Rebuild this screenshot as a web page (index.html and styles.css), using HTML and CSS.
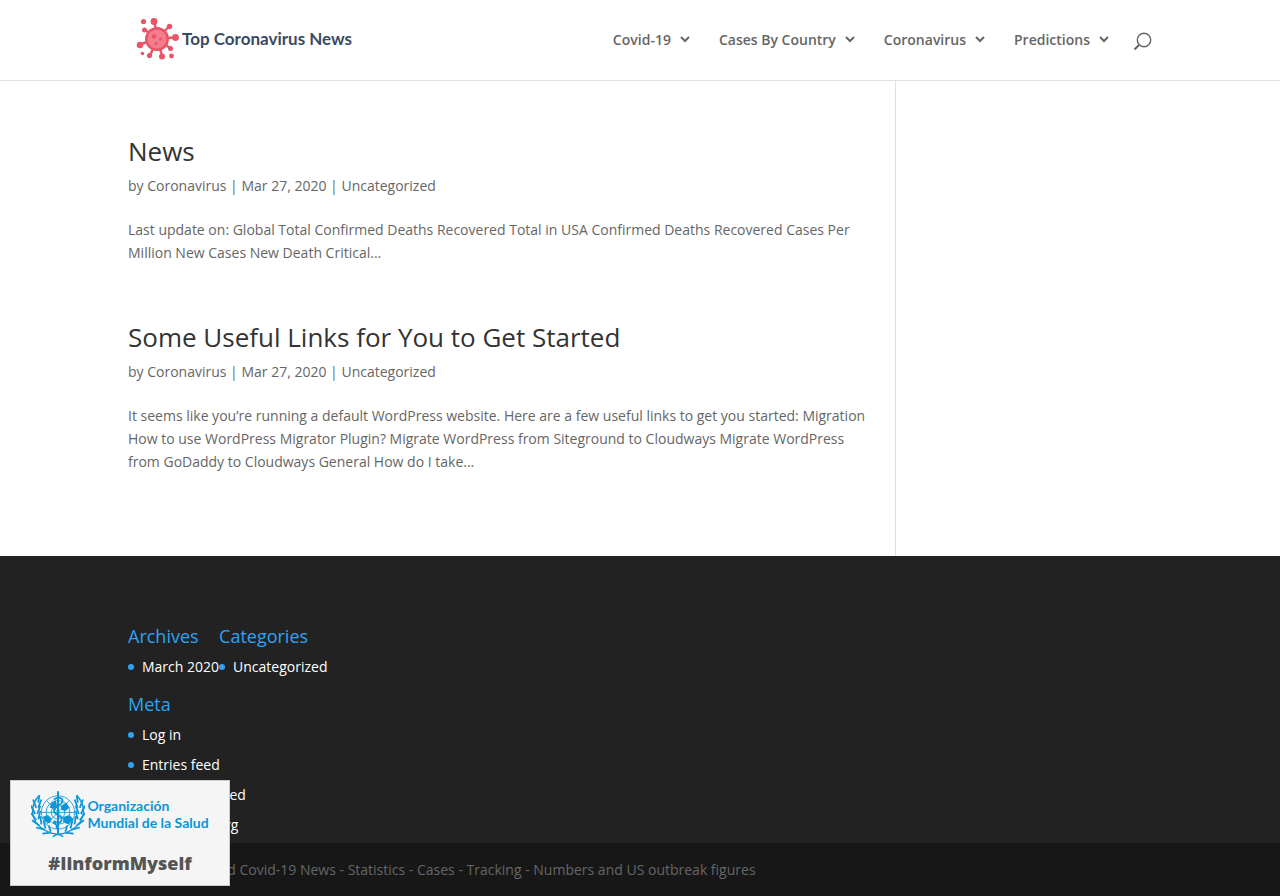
FILE: index.html
```html
<!DOCTYPE html>
<html lang="en">
<head>
<meta charset="utf-8">
<meta name="viewport" content="width=device-width, initial-scale=1">
<title>Top Coronavirus News</title>
<link rel="stylesheet" href="styles.css">
</head>
<body>
<header class="site-header">
  <div class="container header-row">
    <a class="logo" href="#">
      <svg class="logo-mark" viewBox="0 0 44 44" aria-hidden="true">
        <g stroke="#e95468" stroke-width="2.4" stroke-linecap="round">
          <path d="M21.500 21.500L18.500 5M21.500 21.500L33 9.500M21.500 21.500L39 20.500M21.500 21.500L34.500 31.500M21.500 21.500L26 39M21.500 21.500L14 38.500M21.500 21.500L5 27M21.500 21.500L9 13"/>
        </g>
        <g fill="#e95468">
          <circle cx="21" cy="22" r="12"/>
          <circle cx="18" cy="4.500" r="3.400"/><circle cx="33.500" cy="9.500" r="2.700"/>
          <circle cx="39.500" cy="20.500" r="3.400"/><circle cx="34.500" cy="31.500" r="2.500"/>
          <circle cx="26" cy="39.500" r="3"/><circle cx="13.500" cy="38.500" r="2.600"/>
          <circle cx="4" cy="28" r="3.300"/><circle cx="8.500" cy="13" r="2.500"/>
          <circle cx="7.500" cy="4.500" r="2.600"/><circle cx="6.500" cy="36.500" r="1.800"/>
          <circle cx="35.500" cy="39" r="2.400"/>
        </g>
        <circle cx="21" cy="22" r="9.500" fill="#f47c8b"/>
        <g fill="#e95468"><circle cx="18" cy="19.500" r="2.200"/><circle cx="24.500" cy="22" r="1.600"/><circle cx="20" cy="26.500" r="1.600"/></g>
      </svg>
      <span class="logo-text">Top Coronavirus News</span>
    </a>
    <nav class="menu">
      <a href="#">Covid-19<svg class="chevron" viewBox="0 0 12 8" aria-hidden="true"><path d="M2 2L6 6L10 2"/></svg></a>
      <a href="#">Cases By Country<svg class="chevron" viewBox="0 0 12 8" aria-hidden="true"><path d="M2 2L6 6L10 2"/></svg></a>
      <a href="#">Coronavirus<svg class="chevron" viewBox="0 0 12 8" aria-hidden="true"><path d="M2 2L6 6L10 2"/></svg></a>
      <a href="#">Predictions<svg class="chevron" viewBox="0 0 12 8" aria-hidden="true"><path d="M2 2L6 6L10 2"/></svg></a>
      <button class="search" type="button" aria-label="Search"><svg viewBox="0 0 20 20" aria-hidden="true"><circle cx="12" cy="8" r="6.700"/><path d="M7 13L2.500 17.500" stroke-width="2"/></svg></button>
    </nav>
  </div>
</header>
<main class="container content">
  <div class="posts">
    <article class="post">
      <h2><a href="#">News</a></h2>
      <p class="meta">by <a href="#">Coronavirus</a> | Mar 27, 2020 | <a href="#">Uncategorized</a></p>
      <p>Last update on: Global Total Confirmed Deaths Recovered Total in USA Confirmed Deaths Recovered Cases Per Million New Cases New Death Critical...</p>
    </article>
    <article class="post">
      <h2><a href="#">Some Useful Links for You to Get Started</a></h2>
      <p class="meta">by <a href="#">Coronavirus</a> | Mar 27, 2020 | <a href="#">Uncategorized</a></p>
      <p>It seems like you’re running a default WordPress website. Here are a few useful links to get you started: Migration How to use WordPress Migrator Plugin? Migrate WordPress from Siteground to Cloudways Migrate WordPress from GoDaddy to Cloudways General How do I take...</p>
    </article>
  </div>
</main>
<footer class="site-footer">
  <div class="container widgets">
    <div class="widget-row">
      <section class="widget"><h4>Archives</h4><ul><li><a href="#">March 2020</a></li></ul></section>
      <section class="widget"><h4>Categories</h4><ul><li><a href="#">Uncategorized</a></li></ul></section>
    </div>
    <section class="widget"><h4>Meta</h4>
      <ul><li><a href="#">Log in</a></li><li><a href="#">Entries feed</a></li><li><a href="#">Comments feed</a></li><li><a href="#">WordPress.org</a></li></ul>
    </section>
  </div>
  <div class="footer-bottom"><p class="container">Coronavirus and Covid-19 News - Statistics - Cases - Tracking - Numbers and US outbreak figures</p></div>
</footer>
<a class="who-badge" href="#">
  <span class="who-logo">
    <svg class="who-mark" viewBox="0 0 52 46" aria-hidden="true">
      <g fill="none" stroke="#0b96d8">
        <g stroke-width=".8"><circle cx="26" cy="21.500" r="16"/><circle cx="26" cy="21.500" r="11.500"/><circle cx="26" cy="21.500" r="6.500"/><path d="M10 21.500H42M15 10L37 33M37 10L15 33"/></g>
        <path d="M26 1V43" stroke-width="1.900"/>
        <path d="M22 9C28 5 33 9 29 13C25 16 20 18 23 22C26 25 32 26 29 30C27 32 23 33 25 37" stroke-width="1.700"/>
        <path d="M8 5C-3 17 0 34 18 41C23 43 27 41 31 45M44 5C55 17 52 34 34 41C29 43 25 41 21 45" stroke-width="1.300"/>
        <path d="M7 12L8 5M5 17L2 9M7 17L10 9M4 23L0 15M6 23L9 15M5 29L0 22M7 28L9 20M8 34L1 29M10 33L9 25M13 38L5 36M14 37L12 29M19 41L11 42M19 40L17 34M45 12L44 5M47 17L50 9M45 17L42 9M48 23L52 15M46 23L43 15M47 29L52 22M45 28L43 20M44 34L51 29M42 33L43 25M39 38L47 36M38 37L40 29M33 41L41 42M33 40L35 34" stroke-width="1.700"/>
      </g>
      <path fill="#0b96d8" d="M11 26L16 24L20 27L18 32L14 31ZM20 12L24 10L25 15L22 18L18 17ZM29 15L34 12L37 17L33 20L29 19ZM31 26L37 24L41 28L36 33L31 31ZM22 29L25 30L24 34L21 32Z"/>
    </svg>
    <span class="who-name">Organización<br>Mundial de la Salud</span>
  </span>
  <strong class="hashtag">#IinformMyself</strong>
</a>
</body>
</html>
```
FILE: styles.css
```css
* { box-sizing: border-box; }
body { margin: 0; min-height: 100vh; display: flex; flex-direction: column; background: #fff; color: #666; font: 14px/23px "Open Sans", Arial, sans-serif; }
a { color: inherit; text-decoration: none; }
h2, h4, p, ul { margin: 0; padding: 0; font-weight: 400; }
.container { width: 80%; max-width: 1080px; margin: 0 auto; }
.site-header { border-bottom: 1px solid #e0e0e0; }
.header-row { display: flex; align-items: center; justify-content: space-between; min-height: 80px; padding-bottom: 2px; }
.logo { display: flex; align-items: center; gap: 2px; padding-left: 8px; }
.logo-mark { width: 44px; height: 44px; }
.logo-text { color: #3a4b63; font: 700 17px/24px "Lato", sans-serif; white-space: nowrap; }
.menu { display: flex; align-items: center; gap: 28px; font-weight: 600; }
.menu a { display: flex; align-items: center; gap: 8px; white-space: nowrap; }
.chevron { width: 12px; height: 8px; fill: none; stroke: #666; stroke-width: 2; }
.search { width: 20px; height: 20px; margin: 6px 0 0 -6px; padding: 0; border: 0; background: none; }
.search svg { display: block; width: 20px; height: 20px; fill: none; stroke: #666; stroke-width: 1.4; }
.content { flex: 1; display: flex; }
.posts { width: 75%; padding: 57px 20px 23px 0; border-right: 1px solid #e0e0e0; }
.post { margin-bottom: 60px; }
.post h2 { padding-bottom: 10px; color: #333; font-size: 26px; line-height: 26px; }
.meta { margin-bottom: 21px; }
.site-footer { background: #222; color: #fff; }
.widgets { padding-top: 69px; }
.widget-row { display: flex; }
.widget h4 { padding-bottom: 8px; color: #2ea3f2; font-size: 18px; line-height: 22px; }
.widget ul { list-style: none; }
.widget li { display: flex; align-items: center; gap: 8px; margin-bottom: 6px; line-height: 24px; }
.widget-row .widget { padding-bottom: 8px; }
.widget li::before { content: ""; width: 6px; height: 6px; border-radius: 50%; background: #2ea3f2; }
.footer-bottom { padding: 15px 0; background: #171717; color: #666; }
.who-badge { position: fixed; left: 10px; bottom: 10px; width: 220px; padding: 9px 16px; border: 1px solid #ccc; background: #f5f5f5; color: #555; text-align: center; }
.who-logo { display: flex; align-items: center; justify-content: center; gap: 2px; }
.who-mark { width: 54px; height: 48px; flex: none; }
.who-name { color: #0b96d8; font: 700 14px/17px "Lato", sans-serif; text-align: left; white-space: nowrap; }
.hashtag { display: block; padding-top: 13px; font-size: 18px; font-weight: 800; line-height: 25px; }
```
